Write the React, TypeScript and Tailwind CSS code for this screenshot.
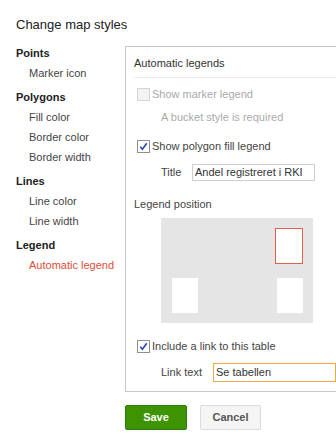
import type { ReactNode } from 'react';

const navGroups = [
    { title: 'Points', items: ['Marker icon'] },
    { title: 'Polygons', items: ['Fill color', 'Border color', 'Border width'] },
    { title: 'Lines', items: ['Line color', 'Line width'] },
    { title: 'Legend', items: ['Automatic legend'] },
];

function Checkbox({ checked, disabled }: { checked?: boolean; disabled?: boolean }) {
    return (
        <span
            className={`flex h-[13px] w-[13px] shrink-0 items-center justify-center border ${disabled ? 'border-[#d4d4d4] bg-[#f3f3f3]' : 'border-[#8f8f8f] bg-white'
                }`}
        >
            {checked && (
                <svg viewBox="0 0 11 11" className="h-[11px] w-[11px]">
                    <path d="M2.2 5.8 L4.4 8.3 L8.8 2.2" fill="none" stroke="#2546b8" strokeWidth="1.6" />
                </svg>
            )}
        </span>
    );
}

function Row({ children, className = '' }: { children: ReactNode; className?: string }) {
    return <div className={`flex h-[20px] items-center ${className}`}>{children}</div>;
}

export default function App() {
    return (
        <div
            className="h-[445px] w-[336px] overflow-hidden bg-white pl-[16px] pt-[17px] text-[11px] text-[#444]"
            style={{ fontFamily: '"Liberation Sans", Arial, sans-serif' }}
        >
            <h1 className="text-[13px] leading-[16px] text-[#222]">Change map styles</h1>

            <div className="mt-[10px] flex items-start">
                {/* Left nav */}
                <div className="w-[109px] shrink-0">
                    {navGroups.map((g, gi) => (
                        <div key={g.title} className={gi > 0 ? 'mt-[4px]' : ''}>
                            <div className="flex h-[20px] items-center font-bold text-[#222]">{g.title}</div>
                            {g.items.map((item) => (
                                <div
                                    key={item}
                                    className={`flex h-[20px] items-center pl-[13px] ${item === 'Automatic legend' ? 'text-[#dd4b39]' : 'text-[#444]'
                                        }`}
                                >
                                    {item}
                                </div>
                            ))}
                        </div>
                    ))}
                </div>

                {/* Panel */}
                <div className="mt-[3px] w-[240px] shrink-0">
                    <div className="border border-[#c6c6c6] pb-[9px] pl-[8px]">
                        <div className="border-b border-[#ebebeb] pb-[7px] pt-[9px] leading-[14px] text-[#333]">
                            Automatic legends
                        </div>

                        <Row className="mt-[6px] pl-[3px] text-[#aaa]">
                            <Checkbox disabled />
                            <span className="ml-[2px]">Show marker legend</span>
                        </Row>
                        <Row className="mt-[3px] pl-[27px] text-[#aaa]">A bucket style is required</Row>

                        <Row className="mt-[9px] pl-[3px]">
                            <Checkbox checked />
                            <span className="ml-[2px]">Show polygon fill legend</span>
                        </Row>
                        <Row className="mt-[6px] pl-[27px]">
                            <span className="w-[31px]">Title</span>
                            <div className="flex h-[17px] w-[123px] items-center border border-[#cfcfcf] pl-[2px] text-[#333]">
                                Andel registreret i RKI
                            </div>
                        </Row>

                        <Row className="mt-[12px]">Legend position</Row>

                        <div className="ml-[27px] mt-[4px] h-[105px] w-[152px] bg-[#e5e5e5] pt-[10px]">
                            <div className="flex justify-end pr-[10px]">
                                <div className="h-[36px] w-[28px] border border-[#e0604f] bg-white" />
                            </div>
                            <div className="mt-[14px] flex justify-between pl-[11px] pr-[10px]">
                                <div className="h-[35px] w-[26px] bg-white" />
                                <div className="h-[35px] w-[26px] bg-white" />
                            </div>
                        </div>

                        <Row className="mt-[13px] pl-[3px]">
                            <Checkbox checked />
                            <span className="ml-[2px]">Include a link to this table</span>
                        </Row>
                        <Row className="mt-[6px] pl-[27px]">
                            <span className="w-[52px]">Link text</span>
                            <div className="flex h-[19px] w-[123px] items-center border border-[#e8ab45] pl-[2px] text-[#333]">
                                Se tabellen
                            </div>
                        </Row>
                    </div>

                    <div className="mt-[13px] flex gap-[13px]">
                        <button className="flex h-[25px] w-[62px] items-center justify-center rounded-[2px] border border-[#2d7d16] bg-[#3d9400] font-bold text-white">
                            Save
                        </button>
                        <button className="flex h-[25px] w-[61px] items-center justify-center rounded-[2px] border border-[#dcdcdc] bg-[#f5f5f5] font-bold text-[#555]">
                            Cancel
                        </button>
                    </div>
                </div>
            </div>
        </div>
    );
}
